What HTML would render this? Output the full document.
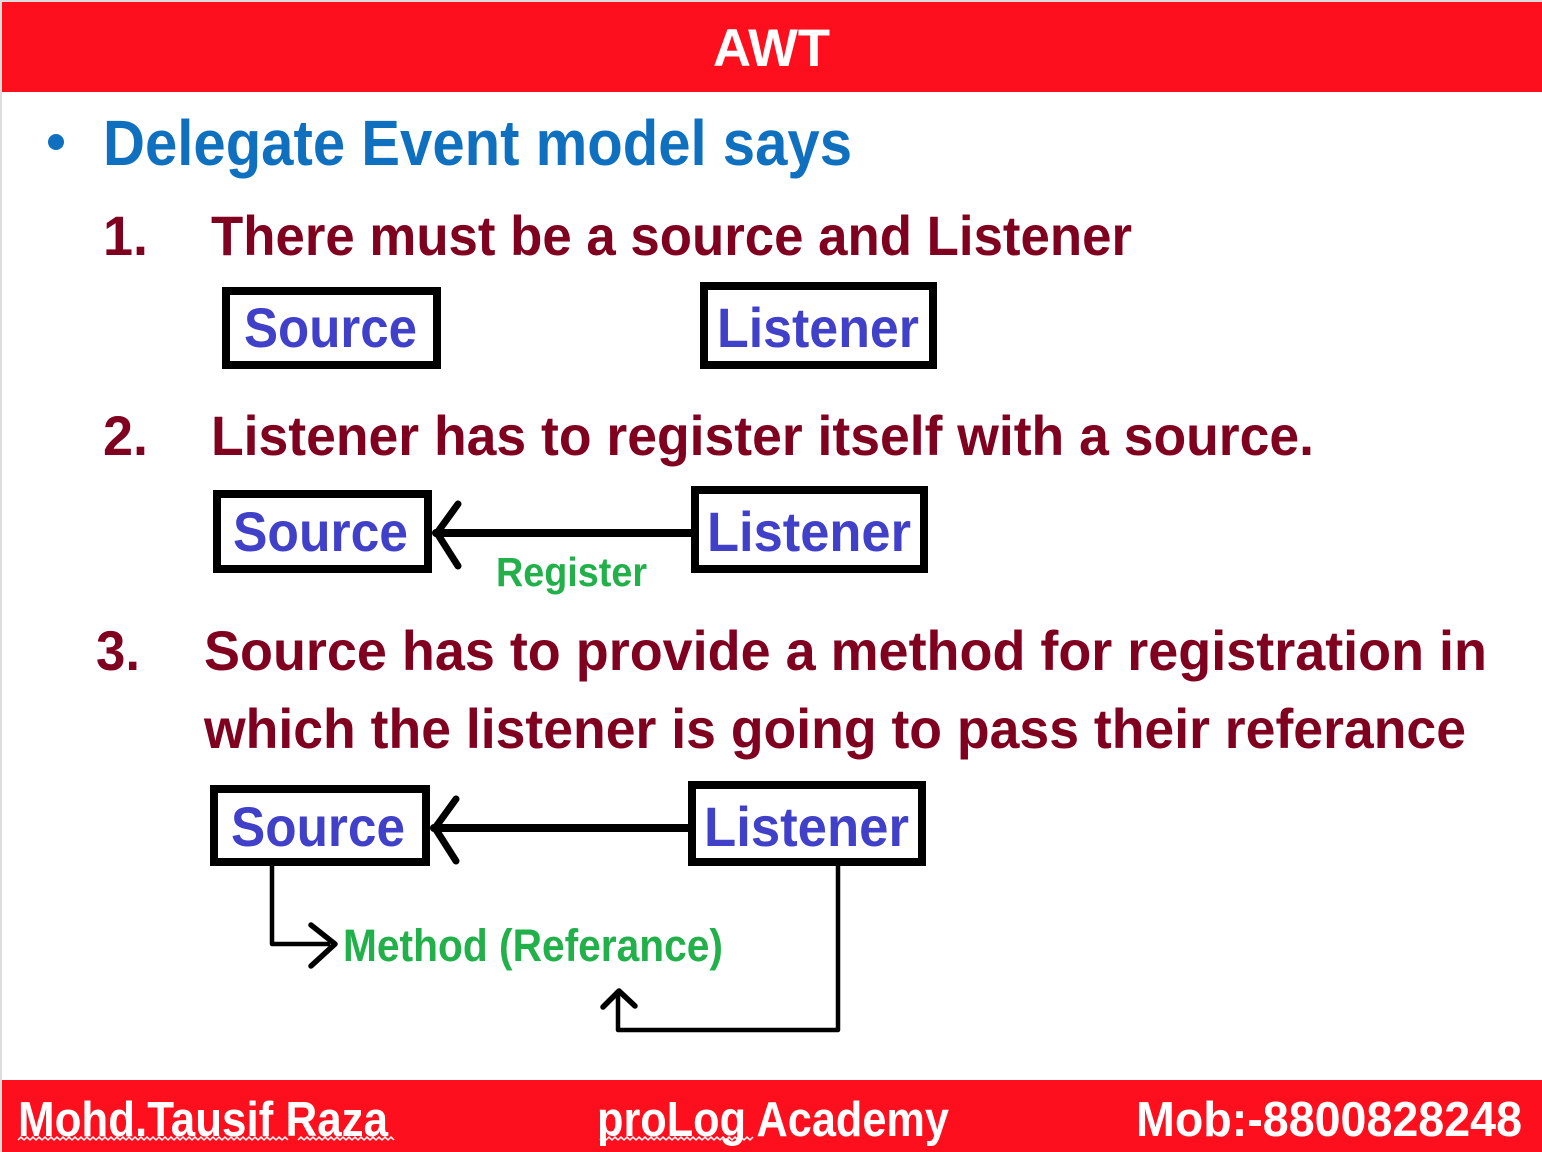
<!DOCTYPE html>
<html><head><meta charset="utf-8"><style>
html,body{margin:0;padding:0;background:#fff}
svg{display:block}
text{font-family:"Liberation Sans",sans-serif;font-weight:bold}
</style></head><body>
<svg width="1542" height="1152" viewBox="0 0 1542 1152" xmlns="http://www.w3.org/2000/svg">
<rect x="0" y="0" width="1542" height="1152" fill="#fff"/>
<rect x="0" y="0" width="2" height="1152" fill="#ddd"/>
<rect x="0" y="0" width="1542" height="2" fill="#ddd"/>
<rect x="2" y="2" width="1540" height="90" fill="#FE0F1E"/>
<text x="713" y="66" font-size="53" fill="#fff" textLength="117" lengthAdjust="spacingAndGlyphs">AWT</text>

<circle cx="56" cy="142" r="8" fill="#1070C0"/>
<text x="103" y="165" font-size="64" fill="#1070C0" textLength="749" lengthAdjust="spacingAndGlyphs">Delegate Event model says</text>

<g fill="#800020" font-size="56">
<text x="103" y="255" textLength="45" lengthAdjust="spacingAndGlyphs">1.</text>
<text x="211" y="255" textLength="921" lengthAdjust="spacingAndGlyphs">There must be a source and Listener</text>
<text x="103" y="455" textLength="45" lengthAdjust="spacingAndGlyphs">2.</text>
<text x="211" y="455" textLength="1103" lengthAdjust="spacingAndGlyphs">Listener has to register itself with a source.</text>
<text x="96" y="670" textLength="44" lengthAdjust="spacingAndGlyphs">3.</text>
<text x="204" y="670" textLength="1283" lengthAdjust="spacingAndGlyphs">Source has to provide a method for registration in</text>
<text x="204" y="748" textLength="1262" lengthAdjust="spacingAndGlyphs">which the listener is going to pass their referance</text>
</g>

<g fill="none" stroke="#000" stroke-width="8">
<rect x="226" y="291" width="211" height="74"/>
<rect x="704" y="286" width="229" height="79"/>
<rect x="217" y="494" width="211" height="75"/>
<rect x="695" y="490" width="229" height="79"/>
<rect x="214" y="789" width="212" height="73"/>
<rect x="692" y="785" width="230" height="77"/>
</g>
<g fill="#4040C8" font-size="56">
<text x="244" y="347" textLength="173" lengthAdjust="spacingAndGlyphs">Source</text>
<text x="717" y="347" textLength="202" lengthAdjust="spacingAndGlyphs">Listener</text>
<text x="233" y="551" textLength="175" lengthAdjust="spacingAndGlyphs">Source</text>
<text x="707" y="551" textLength="204" lengthAdjust="spacingAndGlyphs">Listener</text>
<text x="231" y="846" textLength="174" lengthAdjust="spacingAndGlyphs">Source</text>
<text x="704" y="846" textLength="205" lengthAdjust="spacingAndGlyphs">Listener</text>
</g>

<g stroke="#000" fill="none" stroke-linecap="round" stroke-linejoin="round">
<line x1="436" y1="533" x2="691" y2="533" stroke-width="8"/>
<polyline points="458,504 437,533 458,566" stroke-width="7"/>
<line x1="434" y1="828" x2="688" y2="828" stroke-width="8"/>
<polyline points="456,799 435,828 456,861" stroke-width="7"/>
<polyline points="272,866 272,944 330,944" stroke-width="4.5" stroke-linecap="butt"/>
<polyline points="311,925 335,944 311,966" stroke-width="5.5"/>
<polyline points="838,866 838,1030 618,1030 618,992" stroke-width="4.5" stroke-linecap="butt"/>
<polyline points="603,1007 619,991 635,1006" stroke-width="5.5"/>
</g>
<g fill="#22B04A">
<text x="496" y="586" font-size="41" textLength="151" lengthAdjust="spacingAndGlyphs">Register</text>
<text x="343" y="961" font-size="45" textLength="380" lengthAdjust="spacingAndGlyphs">Method (Referance)</text>
</g>

<rect x="2" y="1080" width="1540" height="72" fill="#FE0F1E"/>
<g fill="#fff" font-size="49">
<text x="18" y="1136" textLength="370" lengthAdjust="spacingAndGlyphs">Mohd.Tausif Raza</text>
<text x="597" y="1136" textLength="352" lengthAdjust="spacingAndGlyphs">proLog Academy</text>
<text x="1136" y="1136" textLength="386" lengthAdjust="spacingAndGlyphs">Mob:-8800828248</text>
</g>
<g stroke="#fff" stroke-width="1.5" fill="none">
<polyline points="18,1140 21,1137 24,1140 27,1137 30,1140 33,1137 36,1140 39,1137 42,1140 45,1137 48,1140 51,1137 54,1140 57,1137 60,1140 63,1137 66,1140 69,1137 72,1140 75,1137 78,1140 81,1137 84,1140 87,1137 90,1140 93,1137 96,1140 99,1137 102,1140 105,1137 108,1140 111,1137 114,1140 117,1137 120,1140 123,1137 126,1140 129,1137 132,1140 135,1137 138,1140 141,1137 144,1140 147,1137 150,1140 153,1137 156,1140 159,1137 162,1140 165,1137 168,1140 171,1137 174,1140 177,1137 180,1140 183,1137 186,1140 189,1137 192,1140 195,1137 198,1140 201,1137 204,1140 207,1137 210,1140 213,1137 216,1140 219,1137 222,1140 225,1137 228,1140 231,1137 234,1140 237,1137 240,1140 243,1137 246,1140 249,1137 252,1140 255,1137 258,1140 261,1137 264,1140 267,1137 270,1140 273,1137 276,1140 279,1137 282,1140 285,1137 288,1140"/>
<polyline points="298,1140 301,1137 304,1140 307,1137 310,1140 313,1137 316,1140 319,1137 322,1140 325,1137 328,1140 331,1137 334,1140 337,1137 340,1140 343,1137 346,1140 349,1137 352,1140 355,1137 358,1140 361,1137 364,1140 367,1137 370,1140 373,1137 376,1140 379,1137 382,1140 385,1137 388,1140 391,1137 394,1140"/>
<polyline points="600,1140 603,1137 606,1140 609,1137 612,1140 615,1137 618,1140 621,1137 624,1140 627,1137 630,1140 633,1137 636,1140 639,1137 642,1140 645,1137 648,1140 651,1137 654,1140 657,1137 660,1140 663,1137 666,1140 669,1137 672,1140 675,1137 678,1140 681,1137 684,1140 687,1137 690,1140 693,1137 696,1140 699,1137 702,1140 705,1137 708,1140 711,1137 714,1140 717,1137 720,1140 723,1137 726,1140 729,1137 732,1140 735,1137 738,1140 741,1137 744,1140 747,1137 750,1140 753,1137"/>
</g>
</svg>
</body></html>
